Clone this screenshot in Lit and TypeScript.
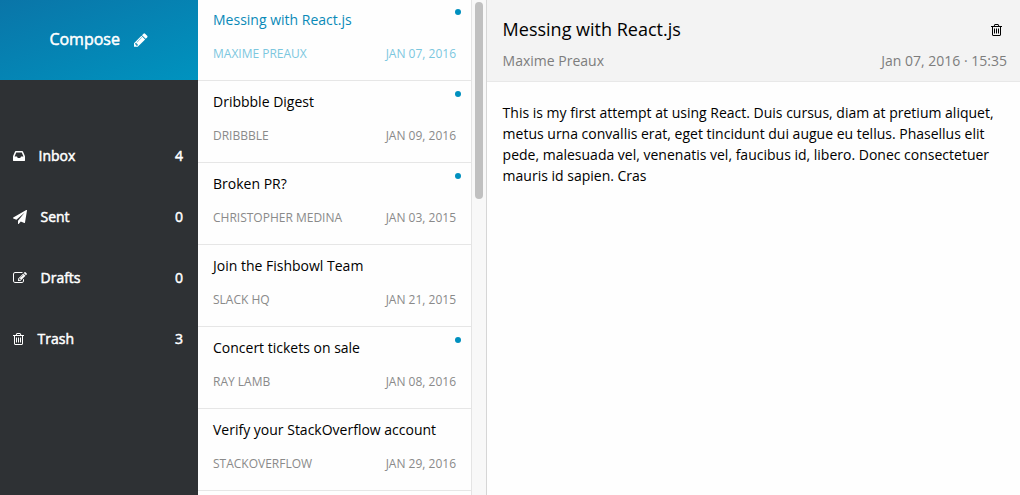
import { LitElement, html, css, svg } from "lit";
import { customElement, property } from "lit/decorators.js";
import { classMap } from "lit/directives/class-map.js";

interface Glyph { x: number; w: number; d: string }

const GLYPHS: Record<string, Glyph> = {
  inbox: { x: 128, w: 1536, d: "M1151 960h316q-1-3-2.5-8t-2.5-8l-212-496h-708l-212 496q-1 2-2.5 8t-2.5 8h316l95 192h320zm513 30v482q0 26-19 45t-45 19h-1408q-26 0-45-19t-19-45v-482q0-62 25-123l238-552q10-25 36.5-42t52.5-17h832q26 0 52.5 17t36.5 42l238 552q25 61 25 123z" },
  plane: { x: 0, w: 1792, d: "M1764 11q33 24 27 64l-256 1536q-5 29-32 45-14 8-31 8-11 0-24-5l-453-185-242 295q-18 23-49 23-13 0-22-4-19-7-30.5-23.5t-11.5-36.5v-349l864-1059-1069 925-395-162q-37-14-40-55-2-40 32-59l1664-960q15-9 32-9 20 0 36 11z" },
  draft: { x: 0, w: 1792, d: "M888 1184l116-116-152-152-116 116v56h96v96h56zm440-720q-16-16-33 1l-350 350q-17 17-1 33t33-1l350-350q17-17 1-33zm80 594v190q0 119-84.5 203.5t-203.5 84.5h-832q-119 0-203.5-84.5t-84.5-203.5v-832q0-119 84.5-203.5t203.5-84.5h832q63 0 117 25 15 7 18 23 3 17-9 29l-49 49q-14 14-32 8-23-6-45-6h-832q-66 0-113 47t-47 113v832q0 66 47 113t113 47h832q66 0 113-47t47-113v-126q0-13 9-22l64-64q15-15 35-7t20 29zm-96-738l288 288-672 672h-288v-288zm444 132l-92 92-288-288 92-92q28-28 68-28t68 28l152 152q28 28 28 68t-28 68z" },
  trash: { x: 192, w: 1408, d: "M704 736v576q0 14-9 23t-23 9h-64q-14 0-23-9t-9-23v-576q0-14 9-23t23-9h64q14 0 23 9t9 23zm256 0v576q0 14-9 23t-23 9h-64q-14 0-23-9t-9-23v-576q0-14 9-23t23-9h64q14 0 23 9t9 23zm256 0v576q0 14-9 23t-23 9h-64q-14 0-23-9t-9-23v-576q0-14 9-23t23-9h64q14 0 23 9t9 23zm128 724v-948h-896v948q0 22 7 40.5t14.5 27 10.5 8.5h832q3 0 10.5-8.5t14.5-27 7-40.5zm-672-1076h448l-48-117q-7-9-17-11h-317q-10 2-17 11zm928 32v64q0 14-9 23t-23 9h-96v948q0 83-47 143.5t-113 60.5h-832q-66 0-113-58.5t-47-141.5v-952h-96q-14 0-23-9t-9-23v-64q0-14 9-23t23-9h309l70-167q15-37 54-63t79-26h320q40 0 79 26t54 63l70 167h309q14 0 23 9t9 23z" },
  pencil: { x: 128, w: 1536, d: "M491 1536l91-91-235-235-91 91v107h128v128h107zm523-928q0-22-22-22-10 0-17 7l-542 542q-7 7-7 17 0 22 22 22 10 0 17-7l542-542q7-7 7-17zm-54-192l416 416-832 832h-416v-416zm683 96q0 53-37 90l-166 166-416-416 166-165q36-38 90-38 53 0 91 38l235 234q37 39 37 91z" },
};

@customElement("mail-icon")
class MailIcon extends LitElement {
  static styles = css`
    :host { display: block; flex: none; height: 1em; }
    .glyph { display: block; height: 1em; fill: currentColor; }
  `;
  @property() name = "inbox";
  render() {
    const g = GLYPHS[this.name];
    return html`<svg class="glyph" viewBox="${g.x} 0 ${g.w} 1792">${svg`<path d=${g.d}></path>`}</svg>`;
  }
}

const FOLDERS = [
  { icon: "inbox", name: "Inbox", count: 4 },
  { icon: "plane", name: "Sent", count: 0 },
  { icon: "draft", name: "Drafts", count: 0 },
  { icon: "trash", name: "Trash", count: 3 },
];

const MAILS = [
  { subject: "Messing with React.js", from: "Maxime Preaux", date: "Jan 07, 2016", unread: true, selected: true },
  { subject: "Dribbble Digest", from: "Dribbble", date: "Jan 09, 2016", unread: true },
  { subject: "Broken PR?", from: "Christopher Medina", date: "Jan 03, 2015", unread: true },
  { subject: "Join the Fishbowl Team", from: "Slack HQ", date: "Jan 21, 2015", unread: false },
  { subject: "Concert tickets on sale", from: "Ray Lamb", date: "Jan 08, 2016", unread: true },
  { subject: "Verify your StackOverflow account", from: "StackOverflow", date: "Jan 29, 2016", unread: false },
];

@customElement("app-root")
class AppRoot extends LitElement {
  static styles = css`
    :host {
      display: grid;
      grid-template-columns: 198px 289px 1fr;
      height: 495px;
      overflow: hidden;
      background: #fefefe;
      color: #000;
      font: 14px/21px "Open Sans", sans-serif;
    }
    * { box-sizing: border-box; }
    .sidebar { background: #2e3134; color: #fff; -webkit-text-stroke: 0.5px #fff; }
    .compose {
      display: flex; align-items: center; justify-content: center; gap: 14px;
      height: 80px; padding-bottom: 1px; padding-right: 1px;
      background: linear-gradient(160deg, #0a75a8, #0093bf);
      font-size: 16px;
    }
    .compose mail-icon { font-size: 16px; }
    .folders { padding-top: 45px; }
    .folder { display: flex; align-items: center; height: 61px; padding: 0 15px 0 13px; }
    .folder-name { flex: 1; margin-left: 13.5px; }
    .list { display: flex; min-height: 0; border-right: 1px solid #d6d6d6; }
    .mails { flex: 1; border-right: 1px solid #e4e4e4; overflow: hidden; }
    .mail {
      position: relative; height: 82px; padding: 9px 15px 0;
      border-bottom: 1px solid #e6e6e6;
    }
    .mail:first-child { height: 81px; }
    .mail:not(:first-child) { padding-top: 10px; }
    .mail-meta {
      display: flex; justify-content: space-between; margin-top: 13px;
      color: #8a8a8a; font-size: 12px; text-transform: uppercase;
    }
    .selected { color: #0a8ab8; }
    .selected .mail-meta { color: #7cc7de; }
    .dot {
      position: absolute; top: 10px; right: 10px; width: 6px; height: 6px;
      border-radius: 50%; background: #0090bf;
    }
    .mail:first-child .dot { top: 9px; }
    .track { width: 14px; padding: 2px 3px; background: #f8f8f8; }
    .thumb { width: 8px; height: 197px; border-radius: 4px; background: #c0c0c0; }
    .head { height: 82px; padding: 16px 13px 0 15.6px; background: #f3f3f3; border-bottom: 1px solid #e8e8e8; }
    .row { display: flex; justify-content: space-between; align-items: center; }
    .title { font-size: 18px; line-height: 27px; }
    .title-row mail-icon { margin-right: 5px; font-size: 14px; }
    .sub { margin-top: 7px; color: #7d7d7d; }
    .body { margin: 0; padding: 20px 16px 0 15.6px; }
  `;

  render() {
    return html`
      <nav class="sidebar">
        <div class="compose"><span>Compose</span><mail-icon name="pencil"></mail-icon></div>
        <div class="folders">
          ${FOLDERS.map((f) => html`
            <div class="folder">
              <mail-icon name=${f.icon}></mail-icon>
              <span class="folder-name">${f.name}</span>
              <span>${f.count}</span>
            </div>`)}
        </div>
      </nav>
      <section class="list">
        <div class="mails">
          ${MAILS.map((m) => html`
            <article class=${classMap({ mail: true, selected: !!m.selected })}>
              ${m.unread ? html`<span class="dot"></span>` : null}
              <div>${m.subject}</div>
              <div class="mail-meta"><span>${m.from}</span><span>${m.date}</span></div>
            </article>`)}
        </div>
        <div class="track"><div class="thumb"></div></div>
      </section>
      <main>
        <header class="head">
          <div class="row title-row"><span class="title">Messing with React.js</span><mail-icon name="trash"></mail-icon></div>
          <div class="row sub"><span>Maxime Preaux</span><span>Jan 07, 2016 · 15:35</span></div>
        </header>
        <p class="body">This is my first attempt at using React. Duis cursus, diam at pretium aliquet, metus urna convallis erat, eget tincidunt dui augue eu tellus. Phasellus elit pede, malesuada vel, venenatis vel, faucibus id, libero. Donec consectetuer mauris id sapien. Cras</p>
      </main>`;
  }
}
